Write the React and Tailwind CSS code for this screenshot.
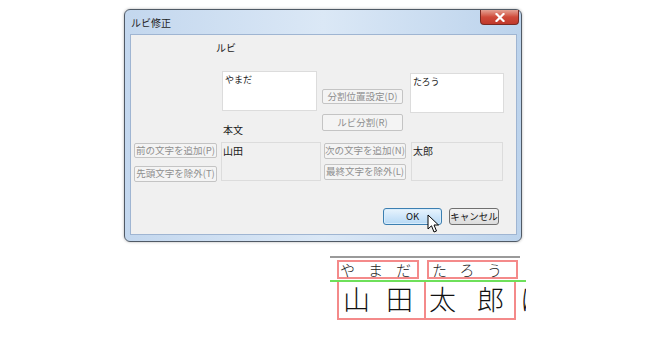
import React from 'react';

const JP = { fontFamily: '"Noto Sans CJK JP", "Noto Sans", sans-serif' };

function Btn({ children, className = '' }) {
  return (
    <div className={'flex items-center justify-center rounded-[2px] border border-[#c4c4c4] bg-[#f4f4f4] text-[9.5px] leading-none text-[#8e8e8e] ' + className}>
      {children}
    </div>
  );
}

function Cursor() {
  return (
    <svg width="14" height="20" viewBox="0 0 14 20" className="absolute left-[43px] top-[5px]">
      <path d="M1 1 L1 15 L4.5 11.8 L7 18 L9.5 17 L7 11 L11.5 11 Z" fill="#fff" stroke="#000" strokeWidth="1" strokeLinejoin="round" />
    </svg>
  );
}

function Dialog() {
  return (
    <div className="w-[398px] h-[233px] rounded-[6px] border border-[#505a66] bg-gradient-to-r from-[#c3d7ee] via-[#dbe8f6] to-[#bcd3ec] flex flex-col shadow-[0_0_3px_rgba(0,0,0,0.3)]" style={JP}>
      {/* title bar */}
      <div className="h-[24px] flex items-start justify-between pl-[6px] pr-[2px]">
        <span className="mt-[5px] text-[10px] text-[#1e1e1e]">ルビ修正</span>
        <div className="w-[39px] h-[15px] rounded-b-[4px] border border-[#7a2a22] border-t-0 bg-gradient-to-b from-[#e3a194] via-[#cf4a3a] to-[#c0392b] flex items-center justify-center">
          <svg width="10" height="9" viewBox="0 0 10 9">
            <path d="M1.5 1 L8.5 8 M8.5 1 L1.5 8" stroke="#fff" strokeWidth="2.2" strokeLinecap="square" />
          </svg>
        </div>
      </div>
      {/* client area */}
      <div className="ml-[5px] w-[387px] h-[201px] border border-[#9fb5d2] bg-[#f0f0f0] flex flex-col text-[10px] text-[#1a1a1a]">
        <div className="h-[36px] pl-[85px] pt-[8px] leading-none">ルビ</div>
        {/* top section */}
        <div className="h-[71px] flex items-start">
          <div className="ml-[91px] w-[95px] flex flex-col">
            <div className="h-[40px] border border-[#dcdcdc] bg-white px-[2px] pt-[2px] text-[9px] leading-[11px]">やまだ</div>
            <div className="mt-[13px] pl-[1px] leading-[12px]">本文</div>
          </div>
          <div className="ml-[5px] mt-[18px] w-[81px] flex flex-col">
            <Btn className="h-[15px]">分割位置設定(D)</Btn>
            <Btn className="mt-[10px] h-[17px]">ルビ分割(R)</Btn>
          </div>
          <div className="ml-[7px] mt-[2px] w-[94px] h-[40px] border border-[#dcdcdc] bg-white px-[2px] pt-[2px] text-[9px] leading-[11px]">たろう</div>
        </div>
        {/* bottom section */}
        <div className="h-[66px] flex items-start">
          <div className="ml-[3px] mt-[1px] w-[83px] flex flex-col">
            <Btn className="h-[15px]">前の文字を追加(P)</Btn>
            <Btn className="mt-[8px] h-[16px]">先頭文字を除外(T)</Btn>
          </div>
          <div className="ml-[4px] w-[100px] h-[39px] border border-[#dcdcdc] px-[1px] pt-[2px] leading-[11px]">山田</div>
          <div className="ml-[3px] mt-[1px] w-[82px] flex flex-col">
            <Btn className="h-[16px]">次の文字を追加(N)</Btn>
            <Btn className="mt-[5px] h-[16px]">最終文字を除外(L)</Btn>
          </div>
          <div className="ml-[5px] w-[92px] h-[39px] border border-[#dcdcdc] px-[1px] pt-[2px] leading-[11px]">太郎</div>
        </div>
        {/* footer */}
        <div className="flex items-start">
          <div className="relative ml-[252px] w-[59px] h-[17px] rounded-[3px] border border-[#3c7fb1] bg-gradient-to-b from-[#e8f4fd] via-[#cfe6fa] to-[#b7d9f4] shadow-[inset_0_0_0_1px_#d8ecfb] flex items-center justify-center text-[9.5px] text-[#111]">
            OK
            <Cursor />
          </div>
          <div className="ml-[7px] w-[50px] h-[17px] rounded-[3px] border border-[#707070] bg-gradient-to-b from-[#f4f4f4] to-[#dcdcdc] flex items-center justify-center text-[9.5px] text-[#111]">キャンセル</div>
        </div>
      </div>
    </div>
  );
}

function RubyFigure() {
  return (
    <div className="ml-[330px] mt-[14px] w-[196px] flex flex-col overflow-hidden" style={JP}>
      <div className="h-[2px] w-[190px] bg-[#9a9a9a]" />
      <div className="mt-[2px] flex">
        <div className="shrink-0 ml-[7px] w-[82px] h-[19px] border-2 border-[#f48a8a] flex items-center justify-between pl-[1px] pr-[6px] text-[15px] leading-none text-[#222] font-light">
          <span>や</span><span>ま</span><span>だ</span>
        </div>
        <div className="shrink-0 ml-[8px] w-[91px] h-[19px] border-2 border-[#f48a8a] flex items-center justify-between pl-[3px] pr-[14px] text-[15px] leading-none text-[#222] font-light">
          <span>た</span><span>ろ</span><span>う</span>
        </div>
      </div>
      <div className="mt-[1px] h-[2px] w-[196px] bg-[#6ee05a]" />
      <div className="flex">
        <div className="shrink-0 ml-[7px] w-[89px] h-[38px] border-l-2 border-r-2 border-b-2 border-l-[#f48a8a] border-r-[#f48a8a] border-b-[#f48a8a] flex items-start justify-between pl-[4px] pr-[11px] pt-[2px] text-[27px] leading-[30px] text-[#111] font-light">
          <span>山</span><span>田</span>
        </div>
        <div className="shrink-0 w-[90px] h-[38px] border-r-2 border-b-2 border-r-[#f48a8a] border-b-[#f48a8a] flex items-start justify-between pl-[3px] pr-[10px] pt-[2px] text-[27px] leading-[30px] text-[#111] font-light">
          <span>太</span><span>郎</span>
        </div>
        <div className="shrink-0 ml-[4px] text-[27px] leading-[30px] pt-[2px] text-[#111] font-light">は</div>
      </div>
    </div>
  );
}

export default function App() {
  return (
    <div className="w-[650px] h-[340px] bg-white overflow-hidden pt-[9px]">
      <div className="ml-[124px]">
        <Dialog />
      </div>
      <RubyFigure />
    </div>
  );
}
